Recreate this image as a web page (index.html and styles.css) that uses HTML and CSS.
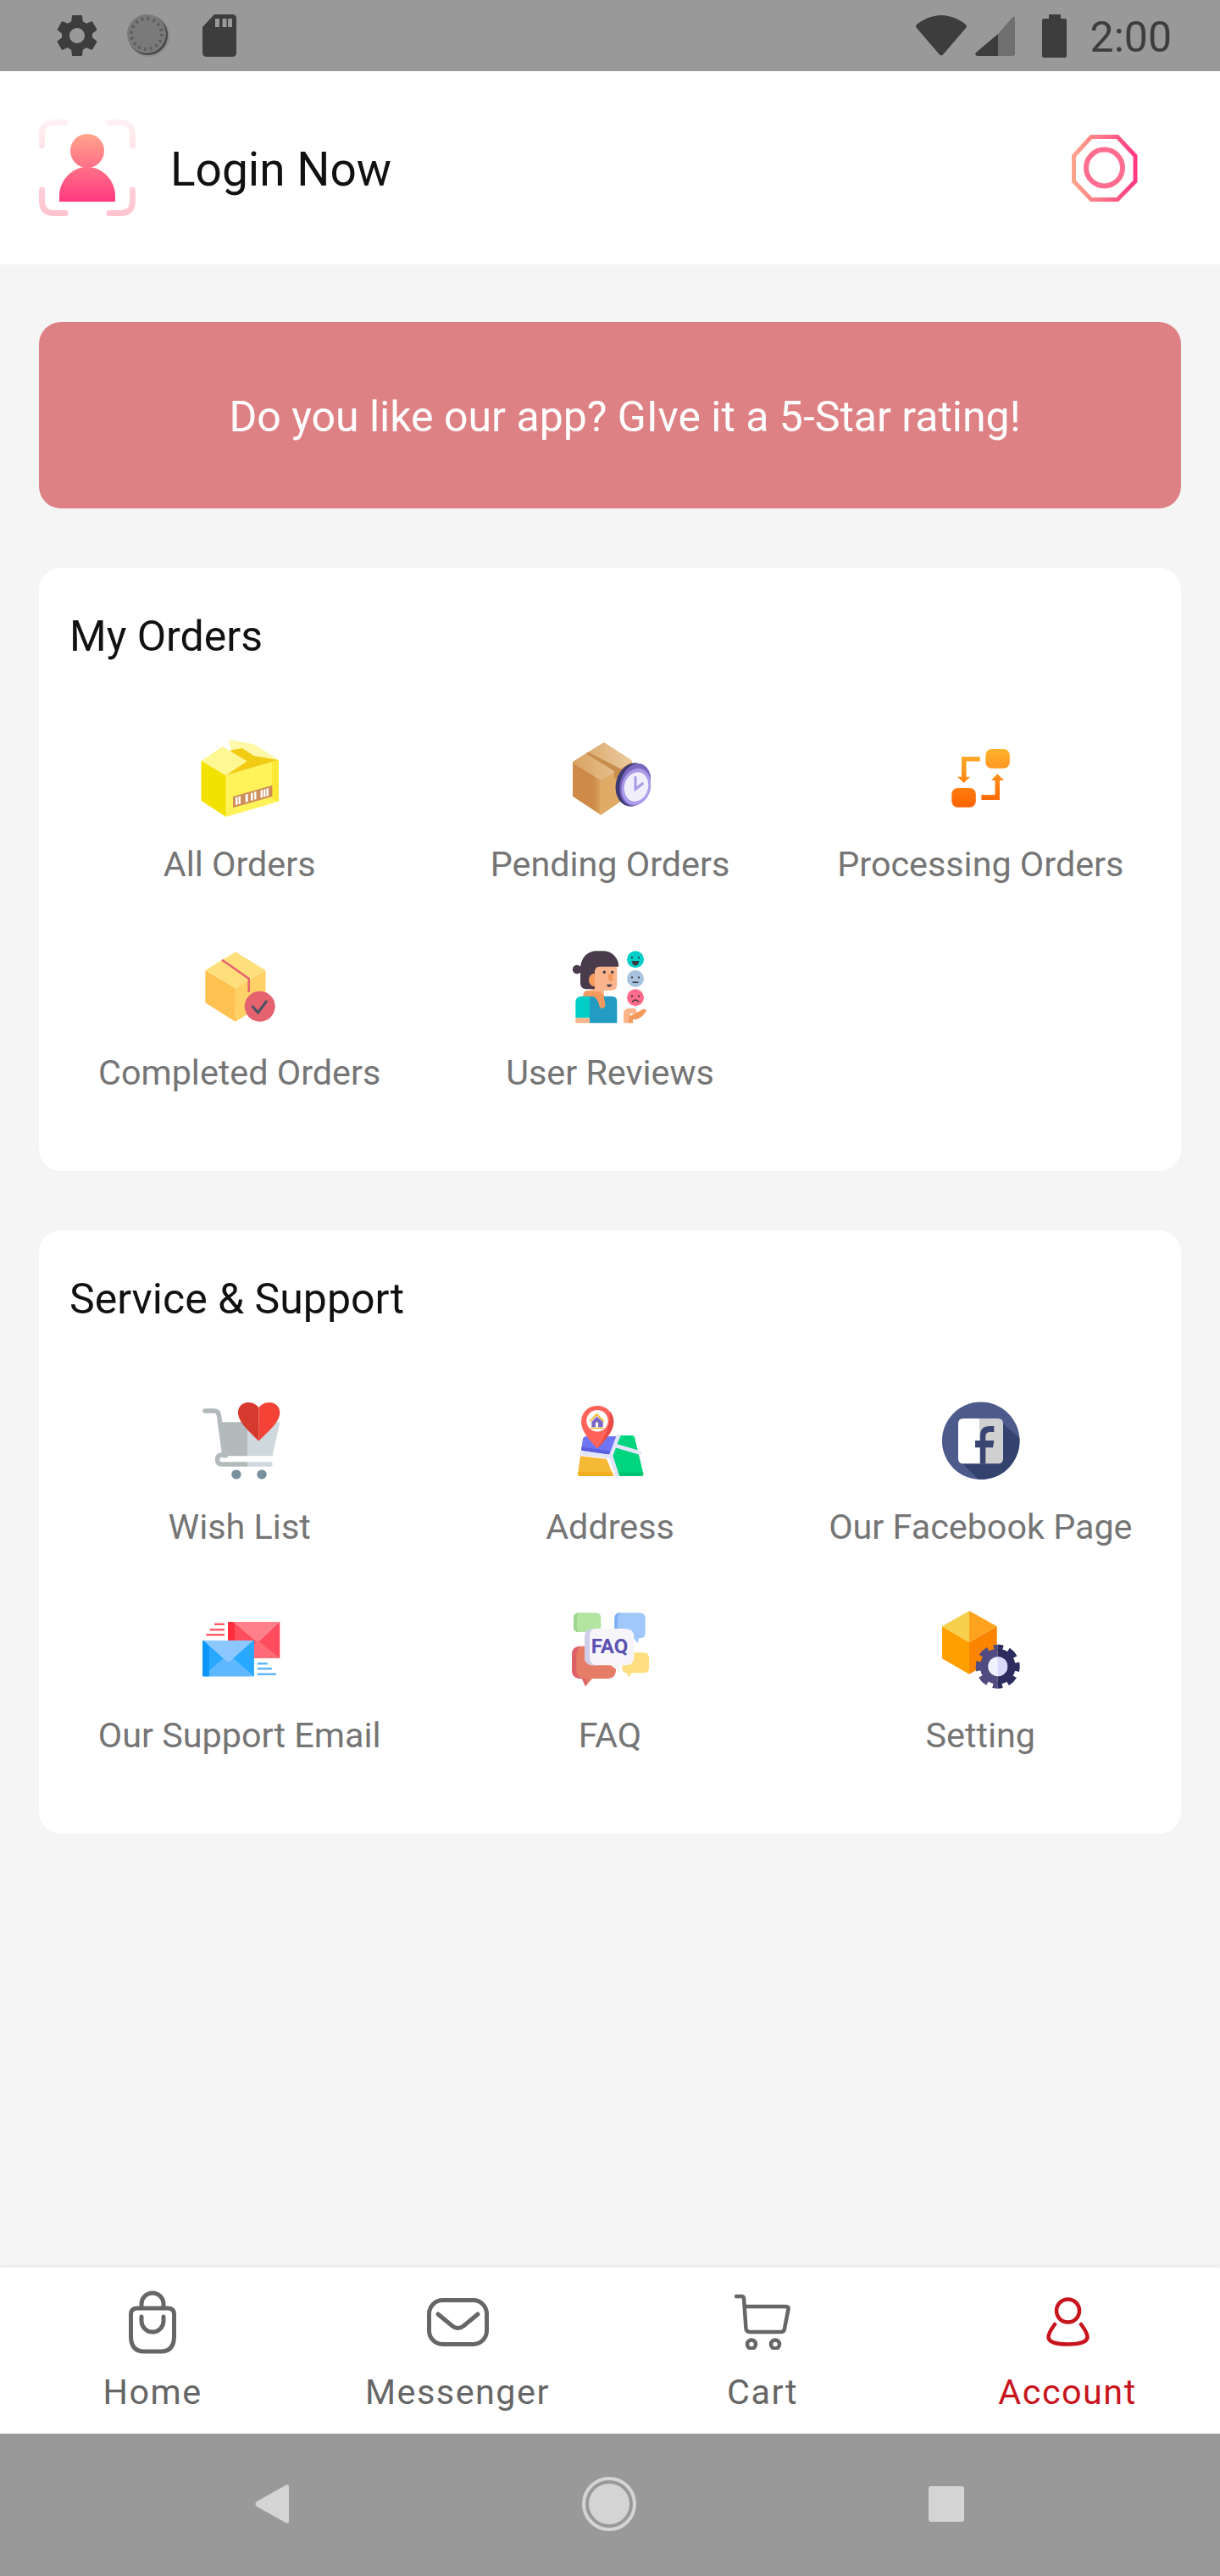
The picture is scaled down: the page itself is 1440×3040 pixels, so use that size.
FILE: index.html
```html
<!DOCTYPE html>
<html lang="en">
<head>
  <meta charset="UTF-8">
  <meta name="viewport" content="width=device-width, initial-scale=1.0">
  <title>Account</title>
  <link rel="stylesheet" href="styles.css">
</head>
<body>
  <div id="app">
    <div class="statusbar">
      <div class="status-left">
        <svg class="st-gear" width="50" height="50" viewBox="2.6 2 18.8 20"><path fill="#3d3d3d" d="M19.14 12.94c.04-.3.06-.61.06-.94 0-.32-.02-.64-.07-.94l2.03-1.58a.49.49 0 0 0 .12-.61l-1.92-3.32a.488.488 0 0 0-.59-.22l-2.39.96c-.5-.38-1.03-.7-1.62-.94l-.36-2.54a.484.484 0 0 0-.48-.41h-3.84c-.24 0-.43.17-.47.41l-.36 2.54c-.59.24-1.13.57-1.62.94l-2.39-.96c-.22-.08-.47 0-.59.22L2.74 8.87c-.12.21-.08.47.12.61l2.03 1.58c-.05.3-.09.63-.09.94s.02.64.07.94l-2.03 1.58a.49.49 0 0 0-.12.61l1.92 3.32c.12.22.37.29.59.22l2.39-.96c.5.38 1.03.7 1.62.94l.36 2.54c.05.24.24.41.48.41h3.84c.24 0 .44-.17.47-.41l.36-2.54c.59-.24 1.13-.56 1.62-.94l2.39.96c.22.08.47 0 .59-.22l1.92-3.32c.12-.22.07-.47-.12-.61l-2.01-1.58zM12 15.6c-1.98 0-3.6-1.62-3.6-3.6s1.62-3.6 3.6-3.6 3.6 1.62 3.6 3.6-1.62 3.6-3.6 3.6z"/></svg>
        <svg class="st-load" width="50" height="50" viewBox="0 0 50 50">
          <circle cx="25.5" cy="25.5" r="24.5" fill="#8a8a8a"/>
          <circle cx="24.5" cy="24.5" r="23.5" fill="#454545"/>
          <circle cx="23" cy="23" r="23" fill="#7a7a7a"/>
          <circle cx="23" cy="23" r="18" fill="none" stroke="#5f5f5f" stroke-width="4" stroke-dasharray="3 4.07"/>
        </svg>
        <svg class="st-sd" width="40" height="50" viewBox="0 0 40 50">
          <path fill="#3d3d3d" d="M14 0H35Q40 0 40 5V45Q40 50 35 50H5Q0 50 0 45V15Z"/>
          <path fill="#999" d="M15 5h5v10h-5zM23.5 5h5v10h-5zM30 5h5v10h-5z"/>
        </svg>
      </div>
      <div class="status-right">
        <svg class="st-wifi" width="60" height="48" viewBox="0 0 60 48"><path fill="#3d3d3d" d="M30 0C41 0 52 5 59 11Q60.500 12.500 59.500 14.500L32 46.500Q30 48.500 28 46.500L.5 14.500Q-.5 12.500 1 11C8 5 19 0 30 0Z"/></svg>
        <svg class="st-signal" width="47" height="47" viewBox="0 0 47 47">
          <path fill="#6f6f6f" d="M27 47V21L44 1.500Q47-1 47 3V44Q47 47 44 47Z"/>
          <path fill="#3d3d3d" d="M27 21V47H3Q-1 47 1 43Z"/>
        </svg>
        <svg class="st-battery" width="29" height="51" viewBox="0 0 29 51"><path fill="#3d3d3d" d="M8 0H22V5H27Q29 5 29 7V49Q29 51 27 51H2Q0 51 0 49V7Q0 5 2 5H8Z"/></svg>
        <span class="st-time">2:00</span>
      </div>
    </div>

    <div class="header">
      <svg width="114" height="114" viewBox="0 0 114 114">
        <defs>
          <linearGradient id="frameGrad" x1="0" y1="0" x2="0" y2="1"><stop offset="0" stop-color="#fff0f3"/><stop offset="1" stop-color="#ffc4cf"/></linearGradient>
          <linearGradient id="personGrad" gradientUnits="userSpaceOnUse" x1="0" y1="17" x2="0" y2="97"><stop offset="0" stop-color="#ffa48b"/><stop offset="1" stop-color="#ff3a82"/></linearGradient>
        </defs>
        <path fill="none" stroke="url(#frameGrad)" stroke-width="7" stroke-linecap="round" d="M3.500 31V18Q3.500 3.500 18 3.500H31M83 3.500H96Q110.500 3.500 110.500 18V31M3.500 83V96Q3.500 110.500 18 110.500H31M83 110.500H96Q110.500 110.500 110.500 96V83"/>
        <circle cx="57" cy="37" r="20" fill="url(#personGrad)"/>
        <path fill="url(#personGrad)" d="M24 97V90C24 72 39 56 57 56S90 72 90 90V97Z"/>
      </svg>
      <span class="login">Login Now</span>
      <svg class="scan" width="80" height="80" viewBox="0 0 80 80">
        <defs>
          <linearGradient id="octGrad" x1="0" y1="0" x2="1" y2="0"><stop offset="0" stop-color="#ffa48b"/><stop offset="1" stop-color="#ff3a82"/></linearGradient>
        </defs>
        <path fill="none" stroke="url(#octGrad)" stroke-width="5" d="M24 3.500H55L76 26V56L55 77.500H24L3.500 56V26Z"/>
        <circle cx="39.500" cy="40" r="21.500" fill="none" stroke="#ff6d90" stroke-width="6"/>
      </svg>
    </div>

    <div class="content">
      <div class="banner">Do you like our app? GIve it a 5-Star rating!</div>

      <div class="card">
        <div class="card-title">My Orders</div>
        <div class="grid">
          <div class="item">
            <svg class="ico" viewBox="0 0 96 96">
              <path fill="#f3e200" d="M2.500 27.700L31.800 45V94L2.500 75Z"/>
              <path fill="#fff359" d="M31.800 45L94 26.700V75.700L31.800 94Z"/>
              <path fill="#fbe936" d="M86 29V73L94 75.700V26.700Z"/>
              <path fill="#f2cc14" d="M37.700 15L50.800 12.700L64.600 21.700L94 26.700L31.800 45Z"/>
              <path fill="#fff694" d="M2.500 27.700L27.800 11L56.700 28.300L31.800 45Z"/>
              <path fill="#fff8a8" d="M35 2.700L64.600 8.300L94 26.700L64.600 21.700L50.800 12.700L37.700 15Z"/>
              <path fill="#cf8d5a" d="M40 70L86.400 56.700V70L40 83.300Z"/>
              <path fill="#fff" d="M43 71.100l2.500-.7v9l-2.500.7zM46.500 70.100l2.500-.7v9l-2.500.7zM54.700 67.800l3-.9v9l-3 .9zM61 66l2.500-.7v9l-2.500.7zM65 64.800l2.500-.7v9l-2.500.7zM72.500 62.700l2.500-.7v9l-2.500.7zM76 61.700l2.500-.7v9l-2.500.7zM79.500 60.700l2.500-.7v9l-2.500.7z"/>
            </svg>
            <div class="label">All Orders</div>
          </div>
          <div class="item">
            <svg class="ico" viewBox="0 0 96 96">
              <defs>
                <linearGradient id="boxTop" x1="0" y1="0" x2="1" y2="0"><stop offset="0" stop-color="#d9a362"/><stop offset="1" stop-color="#eaca9e"/></linearGradient>
                <linearGradient id="boxLeft" x1="0" y1="0" x2="1" y2="0"><stop offset="0" stop-color="#cd8a48"/><stop offset="0.7" stop-color="#cd8a48"/><stop offset="1" stop-color="#dba25c"/></linearGradient>
              </defs>
              <path fill="url(#boxLeft)" stroke="url(#boxLeft)" stroke-width="3" stroke-linejoin="round" d="M5.500 30.500L37.300 51V90L5.500 69Z"/>
              <path fill="#dfab67" stroke="#dfab67" stroke-width="3" stroke-linejoin="round" d="M37.300 51L72.500 30V66L37.300 90Z"/>
              <path fill="url(#boxTop)" stroke="url(#boxTop)" stroke-width="3" stroke-linejoin="round" d="M5.500 29.700L40.700 7.800L72.500 28L37.300 49.200Z"/>
              <path fill="#c98d4e" d="M19.500 19L22 17.400L62 38V50L53 48V40Z"/>
              <ellipse cx="75" cy="56" rx="20" ry="26" fill="#3e3a73" transform="rotate(15 75 56)"/>
              <ellipse cx="78" cy="56" rx="18" ry="25.500" fill="#7b68c0" transform="rotate(15 78 56)"/>
              <ellipse cx="79" cy="58.500" rx="17" ry="22" fill="#ab9be8" transform="rotate(15 79 58.500)"/>
              <ellipse cx="79" cy="58.500" rx="14" ry="17.500" fill="#f1effc" transform="rotate(15 79 58.500)"/>
              <path fill="none" stroke="#ab9be8" stroke-width="3" d="M78 46.300V61.300L87.300 54"/>
            </svg>
            <div class="label">Pending Orders</div>
          </div>
          <div class="item">
            <svg class="ico" viewBox="0 0 96 96">
              <defs><linearGradient id="procGrad" gradientUnits="userSpaceOnUse" x1="0" y1="14" x2="0" y2="83"><stop offset="0" stop-color="#ffb22e"/><stop offset="1" stop-color="#ff6200"/></linearGradient></defs>
              <rect x="54.300" y="14" width="28.500" height="22.700" rx="7" fill="url(#procGrad)"/>
              <rect x="14.300" y="60" width="28.500" height="22.700" rx="7" fill="url(#procGrad)"/>
              <path fill="url(#procGrad)" d="M47.700 23V28.500H31.500V46.700H36L28.700 54L21 46.700H26V23Z"/>
              <path fill="url(#procGrad)" d="M49.300 68H65.500V51H61L68.300 43.300L76 51H71V74H49.300Z"/>
            </svg>
            <div class="label">Processing Orders</div>
          </div>
          <div class="item">
            <svg class="ico" viewBox="0 0 96 96">
              <path fill="#ffc250" d="M7.300 29L42.900 50V89.700L7.300 67.300Z"/>
              <path fill="#ffd166" d="M42.900 50L78.500 29V67.300L42.900 89.700Z"/>
              <path fill="#ffdf7c" d="M7.300 29L42.900 7.300L78.500 29L42.900 50Z"/>
              <path fill="none" stroke="#e5636f" stroke-width="2.500" d="M27 16.700L58.700 39V55"/>
              <circle cx="71.700" cy="71.700" r="18" fill="#e5636f"/>
              <path fill="none" stroke="#4d5265" stroke-width="3" d="M62.500 71L69.500 79L80 65"/>
            </svg>
            <div class="label">Completed Orders</div>
          </div>
          <div class="item">
            <svg class="ico" viewBox="0 0 96 96">
              <path fill="#f59a5f" d="M22 53H41V66H16.300V59Q16.300 53 22 53Z"/>
              <path fill="#fbb58c" d="M25.700 24H56.300V46Q56.300 53 49 53H41V60H25.700Z"/>
              <path fill="#249bc2" d="M24 59.700H50Q56.300 59.700 56.300 66V91.300H24Z"/>
              <path fill="#00cfc8" d="M15 59.700H24V85.300H7.300V67Q7.300 59.700 15 59.700Z"/>
              <path fill="#fbb58c" d="M7.300 85.300H24V91.300H7.300Z"/>
              <path fill="#f59a5f" d="M24 54H37Q42.300 60 42.300 71Q40 77 35.500 72Q35 65 29 60H24Z"/>
              <circle cx="9" cy="28" r="5.200" fill="#4a3b4c"/>
              <path fill="#4a3b4c" d="M13 28C13 14 22 6.300 32 6.300H40C50 6.300 58.300 14 58.300 24.700H36C31 24.700 30 28 30 32V51.300H20Q13 51.300 13 44Z"/>
              <path fill="#f59a5f" d="M30 33H28Q23 35 23 40.500T28 48H30Z"/>
              <circle cx="41.300" cy="31.300" r="1.700" fill="#4a3b4c"/><circle cx="50.700" cy="31.300" r="1.700" fill="#4a3b4c"/>
              <path fill="#f59a5f" d="M45.700 33H51.300V41Q48 44.500 46 39Z"/>
              <path fill="#4a3b4c" d="M44 45.700H50.700Q49.500 48.700 47 48.700T44 45.700Z"/>
              <circle cx="78" cy="16.300" r="10" fill="#00cfc8"/>
              <circle cx="78" cy="39" r="10" fill="#a8c3df"/>
              <circle cx="78" cy="61.300" r="10" fill="#ff6b8a"/>
              <path fill="#3c3a45" d="M73 13h2v2h-2zM81 13h2v2h-2zM73.500 18H82.500Q81.500 23.500 78 23.500T73.500 18ZM73 36.500h2v2h-2zM81 36.500h2v2h-2zM74.500 42.500h7v1.500h-7zM73 58.500h2v2h-2zM81 58.500h2v2h-2z"/>
              <path fill="none" stroke="#3c3a45" stroke-width="1.500" d="M74 66.500Q78 61.500 82 66.500"/>
              <path fill="#fbb58c" d="M64 79Q65 74 71 74H77Q81 76 78 80H72V91.300H64Z"/>
              <path fill="#f59a5f" d="M70 91.300V84L77 80L88 74.500L91 76.500Q87 85 79 87H75V91.300Z"/>
            </svg>
            <div class="label">User Reviews</div>
          </div>
        </div>
      </div>

      <div class="card">
        <div class="card-title">Service &amp; Support</div>
        <div class="grid">
          <div class="item">
            <svg class="ico" viewBox="0 0 96 96">
              <path fill="#b2babc" d="M23.300 26.300H57V66.300H30.500Z"/>
              <path fill="#cfd8dc" d="M57 26.300H95.300L86.600 66.300H57Z"/>
              <path fill="none" stroke="#b2babc" stroke-width="5.500" stroke-linecap="round" d="M7 13H18Q23 13 23.500 19L30 66"/>
              <path fill="none" stroke="#b2babc" stroke-width="5.500" d="M57 76H27Q21.500 76 21.500 70.500Q21.500 65 27 65H34"/>
              <path fill="none" stroke="#cfd8dc" stroke-width="5.500" d="M57 76H84"/>
              <circle cx="84" cy="76" r="2.750" fill="#cfd8dc"/>
              <ellipse cx="43.900" cy="88" rx="5.700" ry="5.500" fill="#78909c"/>
              <ellipse cx="74" cy="88" rx="5.700" ry="5.500" fill="#78909c"/>
              <path fill="#d63a2f" d="M70.400 48.700C58 36 46 26 46 15C46 7 52 3 58 3C64 3 68 6 70.400 9Z"/>
              <path fill="#f44336" d="M70.400 48.700C83 36 95.300 26 95.300 15C95.300 7 89 3 83 3C77 3 73 6 70.400 9Z"/>
            </svg>
            <div class="label">Wish List</div>
          </div>
          <div class="item">
            <svg class="ico" viewBox="0 0 96 96">
              <path fill="#6d75f5" d="M20 43H56L48.300 64.700L14 59.700L16 46Q17 43 20 43Z"/>
              <path fill="#5a60e0" d="M14.600 55.500L49.800 60.700L48.300 64.700L14 59.700Z"/>
              <path fill="#00d47e" d="M60.700 42H74Q76.700 42 77.300 45L87.300 87Q87.300 90 85 90H57.300L49 66.300L57.300 48Z"/>
              <path fill="#00c271" d="M87 85.500L87.300 87Q87.300 90 85 90H57.300L55.700 85.500Z"/>
              <path fill="#f6b935" d="M13 66.300L44 69.700L52.300 90H12.500Q10 90 10 87.500Z"/>
              <path fill="#f0ae1f" d="M10.500 85.500H50.500L52.300 90H12.500Q10 90 10 87.500Z"/>
              <path fill="none" stroke="#e2e4f8" stroke-width="4.500" d="M58.500 41L49 66L57 90.500M13 63L49 67M54.500 54L85 63"/>
              <path fill="#ff6359" d="M33 7C44 7 52.300 15 52.300 26C52.300 37 42 48 33 57.300C24 48 14 37 14 26C14 15 22 7 33 7Z"/>
              <path fill="#e84a45" d="M33 57.300C42 48 52.300 37 52.300 26C52.300 21 50.500 17 48 14C49 30 42 44 33 57.300Z"/>
              <circle cx="33" cy="24.700" r="12.700" fill="#fff"/>
              <path fill="#f6b935" d="M32.300 15.500L41.500 25L40 26L32.300 18.500L25 26L23.500 25Z"/>
              <path fill="#7b68c8" d="M32.300 19.500L39.700 26V32.300H26.300V26Z"/>
              <path fill="#fff" d="M31 26.500h3v5.800h-3z"/>
              <path fill="#f6b935" d="M25 32.700h15.700v1.500H25z"/>
            </svg>
            <div class="label">Address</div>
          </div>
          <div class="item">
            <svg class="ico" viewBox="0 0 96 96">
              <defs><clipPath id="fbClip"><circle cx="48.700" cy="48.300" r="45.800"/></clipPath></defs>
              <circle cx="48.700" cy="48.300" r="45.800" fill="#4d5a8c"/>
              <path clip-path="url(#fbClip)" fill="#34426e" d="M68 22L100 50V100H52L22 70Z"/>
              <path fill="#fff" d="M47.700 22V75.300H28Q22 75.300 22 69V28Q22 22 28 22Z"/>
              <path fill="#d0d0d0" d="M47.700 22H69Q75 22 75 28V69Q75 75.300 69 75.300H47.700Z"/>
              <path fill="#3a4470" d="M48 75.300V56.300H42V48H48V42Q48 31 59 31H64.300V38H60Q54.300 38 54.300 43V48H64.300L63 56.300H54.300V75.300Z"/>
            </svg>
            <div class="label">Our Facebook Page</div>
          </div>
          <div class="item">
            <svg class="ico" viewBox="0 0 96 96">
              <path fill="#ff4d5e" d="M34 16H95.300V58.700H34Z"/>
              <path fill="#ff2d3d" d="M34 16H42V40H34Z"/>
              <path fill="#ff808a" d="M40 16H95.300L71 39Q69 41 67 39Z"/>
              <path fill="#ff6b78" d="M50 58.700L69 38L95.300 58.700Z"/>
              <path fill="#29a8ff" d="M4 38H64.900V80.300H4Z"/>
              <path fill="#5fb8ff" d="M4 80.300L34.500 54L64.900 80.300Z"/>
              <path fill="#0d97fd" d="M4 38H12V80.300H4Z"/>
              <path fill="#8cc8ff" d="M5 38H64L37 62Q34.500 64 32 62Z"/>
              <path fill="#ff5f6d" d="M18 17.500h12v2.400H18zM12.700 24h17.300v2.400H12.700zM8.300 30h21.700v2.400H8.300z"/>
              <path fill="#5fb8ff" d="M68.800 64h12v2.400h-12zM68.800 70h17v2.400h-17zM68.800 76.500h22.200v2.400H68.800z"/>
            </svg>
            <div class="label">Our Support Email</div>
          </div>
          <div class="item">
            <svg class="ico" viewBox="0 0 96 96">
              <path fill="#a0c8fb" d="M60 5.300H83Q89.700 5.300 89.700 12V29Q89.700 35.300 83 35.300H82L80.700 41.300L76 35.300H53.300V12Q53.300 5.300 60 5.300Z"/>
              <path fill="#7fb0f5" d="M60 5.300Q53.300 5.300 53.300 12V30H57V12Q57 7 62 5.300Z"/>
              <path fill="#b3e5a1" d="M12 5.300H31Q37.300 5.300 37.300 11.500V22Q37.300 28 31 28H29L27.300 34L22 28H11Q5 28 5 22V11.500Q5 5.300 12 5.300Z"/>
              <path fill="#9ed691" d="M12 5.300Q5 5.300 5 11.500V22Q5 28 11 28H14Q9 28 9 22V11.500Q9 7 12 5.300Z"/>
              <path fill="#e57c66" d="M14 44.700H45Q55 44.700 55 55V72Q55 83 45 83H27L19 92L15 83H14Q3 83 3 72V55Q3 44.700 14 44.700Z"/>
              <path fill="#dd6069" d="M14 44.700Q3 44.700 3 55V72Q3 83 14 83H15L19 92L21 89L19 83Q8.300 83 8.300 72V55Q8.300 47 14 44.700Z"/>
              <path fill="#ffdf80" d="M68.500 52.300H87.500Q94 52.300 94 58.500V70Q94 76.300 87.500 76.300H74L69.700 81.300L68 76.300Q62.300 76.300 62.300 70V58.500Q62.300 52.300 68.500 52.300Z"/>
              <path fill="#f7f5fa" d="M29 24H66Q76.300 24 76.300 34V57Q76.300 67.300 66 67.300H60L59 74.700L49 67.300H29Q18 67.300 18 57V34Q18 24 29 24Z"/>
              <path fill="#cfcde8" d="M29 24Q18 24 18 34V57Q18 67.300 29 67.300H34Q24 67.300 24 57V34Q24 26 29 24Z"/>
              <text class="faq-text" x="47.500" y="53" text-anchor="middle">FAQ</text>
            </svg>
            <div class="label">FAQ</div>
          </div>
          <div class="item">
            <svg class="ico" viewBox="0 0 96 96">
              <defs>
                <clipPath id="gearLeft"><rect x="30" y="30" width="38.700" height="66"/></clipPath>
                <clipPath id="gearRight"><rect x="68.700" y="30" width="30" height="66"/></clipPath>
              </defs>
              <path fill="#ffa000" d="M3 21.300L35 40V77.700L3 59.300Z"/>
              <path fill="#fb8500" d="M35 40L67.700 21.300V59.300L35 77.700Z"/>
              <path fill="#f5d04d" d="M3 21.300L35 3V40Z"/>
              <path fill="#ffa31f" d="M35 3L67.700 21.300L35 40Z"/>
              <g clip-path="url(#gearLeft)">
                <circle cx="68.700" cy="68.700" r="21" fill="#524b82"/>
                <circle cx="68.700" cy="68.700" r="22.500" fill="none" stroke="#524b82" stroke-width="7" stroke-dasharray="11 6.670" stroke-dashoffset="5.500"/>
              </g>
              <g clip-path="url(#gearRight)">
                <circle cx="68.700" cy="68.700" r="21" fill="#2c2d5e"/>
                <circle cx="68.700" cy="68.700" r="22.500" fill="none" stroke="#2c2d5e" stroke-width="7" stroke-dasharray="11 6.670" stroke-dashoffset="5.500"/>
              </g>
              <circle cx="68.700" cy="68.700" r="11.500" fill="#f1f1ff"/>
              <path fill="#d9d9fb" d="M68.700 57.200A11.500 11.500 0 0 1 68.700 80.200Z"/>
            </svg>
            <div class="label">Setting</div>
          </div>
        </div>
      </div>
    </div>

    <div class="tabbar">
      <div class="tab">
        <div class="tab-icon">
          <svg width="56" height="75" viewBox="0 0 56 75" fill="none" stroke="#666" stroke-width="5">
            <path d="M10 21H46Q53.500 21 53.500 28V54Q53.500 72 38 72H18Q2.500 72 2.500 54V28Q2.500 21 10 21Z"/>
            <path d="M15 21V16A13 13 0 0 1 41 16V21"/>
            <path stroke-linecap="round" d="M15 31V36A13 13 0 0 0 41 36V31"/>
          </svg>
        </div>
        <div class="tab-label">Home</div>
      </div>
      <div class="tab">
        <div class="tab-icon">
          <svg width="73" height="57" viewBox="0 0 73 57" fill="none" stroke="#666" stroke-width="5">
            <rect x="2.500" y="2.500" width="68" height="52" rx="16"/>
            <path stroke-linecap="round" d="M13 19L30 33Q36.500 38 43 33L60 19"/>
          </svg>
        </div>
        <div class="tab-label">Messenger</div>
      </div>
      <div class="tab">
        <div class="tab-icon">
          <svg width="66" height="66" viewBox="0 0 66 66" fill="none" stroke="#666" stroke-width="4.500">
            <path stroke-linecap="round" d="M2 3H8Q11 3 11 5.500L13.500 41Q14 45 18 45H55Q58.500 45 59 41L63.500 18Q64 15 61 15H12"/>
            <circle cx="20" cy="59.500" r="5"/>
            <circle cx="48" cy="59.500" r="5"/>
          </svg>
        </div>
        <div class="tab-label">Cart</div>
      </div>
      <div class="tab active">
        <div class="tab-icon">
          <svg width="51" height="58" viewBox="0 0 51 58" fill="none" stroke="#c8141c" stroke-width="4.500">
            <circle cx="25.500" cy="16" r="13.500"/>
            <path stroke-linecap="round" d="M10 32Q2.500 42 2.500 47Q3 55.500 25.500 55.500Q48 55.500 48.500 47Q48.500 42 41 32"/>
          </svg>
        </div>
        <div class="tab-label">Account</div>
      </div>
    </div>

    <div class="navbar">
      <svg class="nav-back" width="40" height="46" viewBox="0 0 40 46"><path fill="#d4d4d4" d="M36 1Q40-1 40 3V43Q40 47 36 45L2 26Q-1 23 2 20Z"/></svg>
      <svg class="nav-home" width="66" height="64" viewBox="0 0 66 64">
        <circle cx="33" cy="32" r="30" fill="none" stroke="#d4d4d4" stroke-width="4"/>
        <circle cx="33" cy="32" r="24" fill="#d4d4d4"/>
      </svg>
      <div class="nav-square"></div>
    </div>
  </div>
</body>
</html>
```

FILE: styles.css
```css
* {
  margin: 0;
  padding: 0;
  box-sizing: border-box;
}
body {
  font-family: Roboto, "Liberation Sans", sans-serif;
  background-color: #f5f5f5;
}
svg {
  display: block;
}
#app {
  width: 1440px;
  height: 3040px;
  display: flex;
  flex-direction: column;
}
.statusbar {
  height: 84px;
  background-color: #999;
  display: flex;
  align-items: center;
  justify-content: space-between;
  padding: 0 57px 0 66px;
}
.status-left,
.status-right {
  display: flex;
  align-items: center;
}
.st-load {
  margin-left: 34px;
}
.st-sd {
  margin-left: 39px;
}
.st-signal {
  margin-left: 10px;
}
.st-battery {
  margin-left: 32px;
}
.st-time {
  margin-left: 28px;
  padding-top: 3px;
  font-size: 50px;
  color: #3d3d3d;
}
.header {
  height: 228px;
  background-color: #fff;
  display: flex;
  align-items: center;
  padding: 0 96px 0 46px;
}
.login {
  margin-left: 41px;
  padding-top: 3px;
  font-size: 55px;
  color: #111;
}
.scan {
  margin-left: auto;
}
.content {
  flex: 1;
  padding: 68px 46px 0;
}
.banner {
  height: 220px;
  padding: 4px 0 0 35px;
  border-radius: 26px;
  background-color: #de8185;
  color: #fff;
  font-size: 50px;
  display: flex;
  align-items: center;
  justify-content: center;
}
.card {
  height: 712px;
  margin-top: 70px;
  padding: 53px 18px 0;
  border-radius: 26px;
  background-color: #fff;
}
.card-title {
  padding-left: 18px;
  font-size: 50px;
  line-height: 56px;
  color: #111;
}
.grid {
  margin-top: 91px;
  display: grid;
  grid-template-columns: repeat(3, 1fr);
  row-gap: 68px;
}
.item {
  display: flex;
  flex-direction: column;
  align-items: center;
}
.ico {
  width: 96px;
  height: 96px;
}
.label {
  margin-top: 26px;
  font-size: 41.3px;
  line-height: 56px;
  color: #757575;
}
.faq-text {
  font-family: Roboto, sans-serif;
  font-size: 24px;
  font-weight: 700;
  fill: #5b52b0;
}
.tabbar {
  height: 196px;
  background-color: #fff;
  box-shadow: 0 -2px 6px rgba(0, 0, 0, 0.06);
  display: flex;
  padding-top: 24px;
}
.tab {
  flex: 1;
  display: flex;
  flex-direction: column;
  align-items: center;
}
.tab-icon {
  height: 80px;
  display: flex;
  align-items: center;
}
.tab-label {
  margin-top: 19px;
  font-size: 41.3px;
  line-height: 48px;
  letter-spacing: 1.5px;
  color: #666;
}
.active .tab-label {
  color: #c8141c;
}
.navbar {
  height: 168px;
  background-color: #999;
  display: flex;
  align-items: center;
  padding-left: 301px;
}
.nav-back {
  margin-top: -2px;
}
.nav-home {
  margin-left: 345px;
  margin-top: -2px;
}
.nav-square {
  width: 42px;
  height: 42px;
  margin-left: 344px;
  margin-top: -2px;
  border-radius: 3px;
  background-color: #d4d4d4;
}
```
